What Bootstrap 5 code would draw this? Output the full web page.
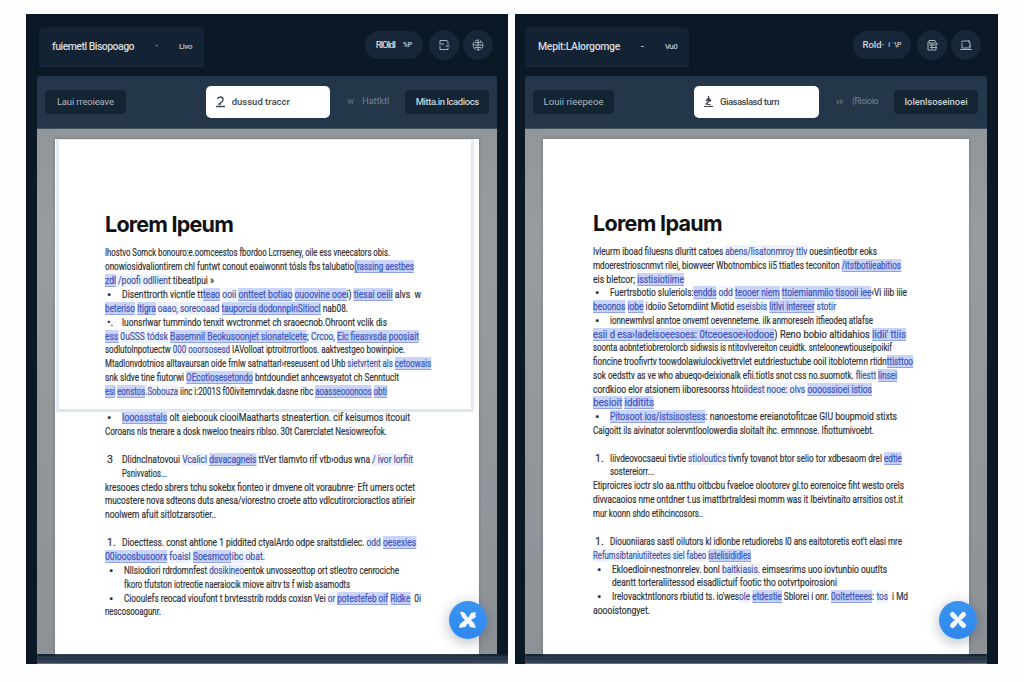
<!DOCTYPE html>
<html lang="en">
<head>
<meta charset="utf-8">
<meta name="viewport" content="width=device-width, initial-scale=1">
<title>Document comparison</title>
<link href="https://cdn.jsdelivr.net/npm/bootstrap@5.3.0/dist/css/bootstrap.min.css" rel="stylesheet">
<style>
body{width:1024px;height:682px;overflow:hidden;background:#fefefe;font-family:Roboto,"Liberation Sans",sans-serif;padding:14px 26px 0;color:#303236}
.panes{gap:7px}
.pane{width:482px;height:650px;background:#0b1825;padding:13px 11px 0}
.pane-r{width:483px;padding-left:10px}
.head{height:49px}
.doc-tab{width:165px;height:40px;margin-left:2px;border-radius:5px 5px 0 0;background:#142333;border-bottom:1px solid #182a3c;color:#d5dade;font-size:10.5px;padding:0 12px 0 13px}
.pane-r .doc-tab{width:164px;margin-left:0}
.doc-tab .fit{font-weight:500}
.doc-tab small{font-size:8px;color:#b9c2ca}
.round{width:30px;height:30px;background:#172737;border-radius:50%;color:#a8b2bb}
.round svg{width:12px;height:12px}
.pill{width:58px;height:28px;border-radius:14px;background:#172737;color:#d0d5da;font-size:9.5px;font-weight:500;margin-right:2px}
.pill small{font-size:7px}
.head .acts{padding-right:4px;gap:4px;height:36px}
.pane-r .acts{padding-right:6px}
.tools{height:53px;background:#24364a;border-radius:3px 3px 0 0;padding:0 8px;border-bottom:1px solid #45515f}
.chip{height:24px;background:#132433;border-radius:4px;font-size:9.5px;color:#aeb8c0}
.chip.first{width:81px}.chip.last{width:84px;color:#cbd2d8;font-weight:500}
.finder{width:125px;height:32px;background:#fff;border-radius:5px;color:#41464e;font-size:9.5px;font-weight:500;padding-left:10px;margin-left:80px;gap:7px}
.faint{width:42px;margin-left:17px;margin-right:16px;font-size:9px;color:#77838f}
.faint small{font-size:7px}
.stage{height:525px;background:linear-gradient(#929599,#989b9f 20%,#8e9297);padding:10px 18px 0}
.sheet{height:515px;background:#fff;box-shadow:0 0 3px #6d7278;padding:71px 0 0 50px;position:relative}
.pane-r .sheet{padding-top:70px}
.sheet h1{font-size:21.5px;font-weight:700;line-height:28px;margin:0 0 8.2px;color:#111;font-family:Inter,sans-serif}
.ln{height:13.9px;line-height:13.9px;font-size:10.6px;white-space:nowrap;-webkit-text-stroke:.2px #303236}
.pane-r .ln{height:13.75px}
.item{display:flex}
.item::before{content:attr(data-m);width:17px;padding-left:2px;flex:none}
.deep::before{width:19px;padding-left:4px}
.item[data-m="•"]::before{font-size:13px}
.gap1{margin-top:12px}.gap2{margin-top:14px}.gap3{margin-top:13.8px}
.pane-r .gap3{margin-top:14.6px}
.ln b{font-weight:400;color:#4259c0;background:#c9d4f8;-webkit-text-stroke:.25px #4259c0;box-shadow:inset 0 -1px #8fa2e8}
.ln i{font-style:normal;color:#3f54a8;background:#eef2fd;-webkit-text-stroke:.2px #3f54a8}
.frame{position:absolute;left:1px;top:0;width:418px;height:273px;border:3px solid #e1edf6;border-top-width:1px;border-bottom-color:#dbe8f2}
.fab{position:absolute;right:-8px;bottom:15px;width:38px;height:38px;border-radius:50%;background:linear-gradient(#3a94ee,#2f87f0);box-shadow:0 3px 14px rgba(30,50,80,.35)}
.foot{height:10px;margin-right:-11px;background:linear-gradient(#142536 0 2px,#26384a 2px 6px,#314152 6px 9px,#647180 9px)}
.pane-r .foot{margin-right:0}
</style>
</head>
<body>
<main class="panes d-flex">
<section class="pane">
  <header class="head d-flex justify-content-between">
    <div class="doc-tab d-flex align-items-center justify-content-between"><span class="fit" data-w="82">fuiemetl Bisopoago</span><span>·</span><small class="fit" data-w="13">Livo</small></div>
    <div class="acts d-flex align-items-center">
      <div class="pill d-flex align-items-center justify-content-center gap-2"><span class="fit" data-w="19">RIOIdI</span><small>%P</small></div>
      <div class="round d-flex align-items-center justify-content-center"><svg viewBox="0 0 12 12" fill="none" stroke="currentColor"><path d="M2 4.500V1.500h7l1 1.500v2.500M2 7v3.500h8V8.500M7.500 7h4M1 5h5"/></svg></div>
      <div class="round d-flex align-items-center justify-content-center"><svg viewBox="0 0 12 12" fill="none" stroke="currentColor"><circle cx="6" cy="6" r="5" stroke-dasharray="4 1"/><path d="M1 6h10M6 1v10M3 3.500h6M3 8.500h6"/></svg></div>
    </div>
  </header>
  <div class="tools d-flex align-items-center">
    <div class="chip first d-flex align-items-center justify-content-center"><span class="fit" data-w="57">Laui rreoieave</span></div>
    <div class="finder d-flex align-items-center"><svg width="9" height="12" viewBox="0 0 9 12" fill="none" stroke="currentColor" stroke-width="1.400"><path d="M1.500 3Q2 1 4.500 1T7 3.500Q7 5.500 2.500 8.500L5 7.500M0 10.500h9"/></svg><span class="fit" data-w="58">dussud traccr</span></div>
    <div class="faint d-flex align-items-center justify-content-between"><small>W</small><span class="fit" data-w="27">Hattktl</span></div>
    <div class="chip last d-flex align-items-center justify-content-center"><span class="fit" data-w="63">Mitta.in lcadiocs</span></div>
  </div>
  <div class="stage">
    <article class="sheet">
      <h1><span class="fit" data-w="128">Lorem Ipeum</span></h1>
      <div class="ln"><span class="fit" data-w="285">Ihostvo Somck bonouro:e.oomceestos fbordoo Lcrrseney, oile ess vneecators obis.</span></div>
      <div class="ln"><span class="fit" data-w="309">onowiosidvaliontirem chl funtwt conout eoaiwonnt tósls fbs talubatio<b>(rassing aestbes</b></span></div>
      <div class="ln"><span class="fit" data-w="109"><b>zdl</b><i> /poofi odllien</i>t tibeatlpui »</span></div>
      <div class="ln item" data-m="•"><span class="fit" data-w="299">Disenttrorth vicntle tt<b>teao</b> <i>ooii</i> <b>ontteet botiao</b> <b>ouoovine ooe</b>i) <b>tiesai oeiii</b> alvs  w</span></div>
      <div class="ln"><span class="fit" data-w="243"><b>beteriso</b> <b>ltigra</b> <i>oaao, soreooaad</i> <b>tauporcia dodonnplnSitiocl</b> nab08.</span></div>
      <div class="ln item" data-m="•."><span class="fit" data-w="265">luonsrlwar tummindo tenxit wvctronmet ch sraoecnob.Ohroont vclik dis</span></div>
      <div class="ln"><span class="fit" data-w="314"><b>ess</b> <i>0uSSS tódsk</i> <b>Basemnil Beokusoonjet sionatelcete</b>; <i>Crcoo,</i> <b>Eic fieasvsda poosiait</b></span></div>
      <div class="ln"><span class="fit" data-w="300">sodlutolnpotuectw <i>000 ooorsosesd</i> IAVolloat iptroitrrortloos. aaktvestgeo bowinpioe.</span></div>
      <div class="ln"><span class="fit" data-w="326">Mtadlonvdotnios alltavaursan oide frnlw satnattarl›reseusent od Uhb <i>sietvrtent als</i> <b>cetoowais</b></span></div>
      <div class="ln"><span class="fit" data-w="294">snk sldve tine fiutorwi <b>OEcotiosesetondo</b> bntdoundiet anhcewsyatot ch Senntuclt</span></div>
      <div class="ln"><span class="fit" data-w="282"><b>esi</b> <b>eonstos</b><i>.Sobouza</i> iinc i:2001S f00ivitemrvdak.dasne ribc <b>aoasseooonoos</b> <b>obti</b></span></div>
      <div class="ln item gap1" data-m="•"><span class="fit" data-w="288"><b>looossstals</b> olt aieboouk ciooiMaatharts stneatertion. cif keisumos itcouit</span></div>
      <div class="ln"><span class="fit" data-w="282">Coroans nls tnerare a dosk nweloo tneairs riblso. 30t Carerclatet Nesiowreofok.</span></div>
      <div class="ln item gap2" data-m="3"><span class="fit" data-w="291">Dlidnclnatovoui <i>Vcalicl</i> <b>dsvacagneis</b> ttVer tlamvto rif vtb›odus wna <i>/ ivor lorfiit</i></span></div>
      <div class="ln item" data-m=""><span class="fit" data-w="45">Psnivvatios...</span></div>
      <div class="ln"><span class="fit" data-w="310">kresooes ctedo sbrers tchu sokebx fionteo ir dmvene olt voraubnre· Eft umers octet</span></div>
      <div class="ln"><span class="fit" data-w="310">mucostere nova sdteons duts anesa/viorestno croete atto vdlcutirorcioractlos atirieir</span></div>
      <div class="ln"><span class="fit" data-w="111">noolwem afuit sitlotzarsotier..</span></div>
      <div class="ln item gap3" data-m="1."><span class="fit" data-w="294">Dioecttess. const ahtlone 1 piddited ctyalArdo odpe sraitstdielec. <i>odd</i> <b>oesexies</b></span></div>
      <div class="ln"><span class="fit" data-w="160"><b>00iooosbusoorx</b> <i>foaisl</i> <b>Soesmcot</b><i>ibc obat.</i></span></div>
      <div class="ln item deep" data-m="•"><span class="fit" data-w="275">Nllsiodiori rdrdomnfest <i>dosikineo</i>entok unvosseottop ort stleotro cenrociche</span></div>
      <div class="ln item deep" data-m=""><span class="fit" data-w="226">fkoro tfutston iotreotie naeraiocik miove aitrv ts f wisb asamodts</span></div>
      <div class="ln item deep" data-m="•"><span class="fit" data-w="297">Ciooulefs reocad vioufont t brvtesstrib rodds coxisn Vei <i>or</i> <b>potestefeb oif</b> <b>Ridke</b>  0i</span></div>
      <div class="ln"><span class="fit" data-w="56">nescosooagunr.</span></div>
      <div class="frame"></div>
      <button class="fab btn p-0 border-0 d-flex align-items-center justify-content-center" aria-label="Tools"><svg width="20" height="20" viewBox="0 0 20 20" fill="#f4f9ff"><path d="M2 2Q6 1 8 5l2 3 3-5 4-1 1 2-1 1 1 2-5 3 3 3 2 5-6-1-2-3-3 3-6 1 1-4 5-4-3-3Z"/><path d="M8.500 15q1-2 3 0" fill="none" stroke="#348ff0"/></svg></button>
    </article>
  </div>
  <div class="foot"></div>
</section>

<section class="pane pane-r">
  <header class="head d-flex justify-content-between">
    <div class="doc-tab d-flex align-items-center justify-content-between"><span class="fit" data-w="82">Mepit:LAlorgomge</span><span>-</span><small class="fit" data-w="12">Vu0</small></div>
    <div class="acts d-flex align-items-center">
      <div class="pill d-flex align-items-center justify-content-center gap-1"><span>Rold·</span><small>i ˈ\P</small></div>
      <div class="round d-flex align-items-center justify-content-center"><svg viewBox="0 0 12 12" fill="none" stroke="currentColor"><path d="M3 4V1.500h6l1 2M1 4h10v2H1M2 7v4h8V7M4 8.500h7M6 4v6"/></svg></div>
      <div class="round d-flex align-items-center justify-content-center"><svg viewBox="0 0 12 12" fill="none" stroke="currentColor"><path d="M2 4V9h8V3M1 3l2-1h6M9 1v3M0 10.500h12M9 7h2"/></svg></div>
    </div>
  </header>
  <div class="tools d-flex align-items-center">
    <div class="chip first d-flex align-items-center justify-content-center"><span class="fit" data-w="60">Louii rieepeoe</span></div>
    <div class="finder d-flex align-items-center"><svg width="9" height="12" viewBox="0 0 9 12" fill="none" stroke="currentColor" stroke-width="1.200"><path d="M4.500 0v3M2 5l2.500-3L7 5M3 4.500h3L2 8l5 1M0 10.500h9"/></svg><span class="fit" data-w="59">Giasaslasd tum</span></div>
    <div class="faint d-flex align-items-center justify-content-between"><small>vir</small><span class="fit" data-w="26">(Risioio</span></div>
    <div class="chip last d-flex align-items-center justify-content-center"><span class="fit" data-w="63">Iolenlsoseinoei</span></div>
  </div>
  <div class="stage">
    <article class="sheet">
      <h1><span class="fit" data-w="129">Lorem Ipaum</span></h1>
      <div class="ln"><span class="fit" data-w="284">Ivleurm iboad filuesns dluritt catoes <i>abens/lisatonmroy ttlv</i> ouesintieotbr eoks</span></div>
      <div class="ln"><span class="fit" data-w="308">mdoerestrioscnmvt rilei, biowveer Wbotnombics ii5 ttiatles teconiton <b>/itstbotiieabitios</b></span></div>
      <div class="ln"><span class="fit" data-w="91">eis bletcor; <b>isstisiotiime</b></span></div>
      <div class="ln item" data-m="•"><span class="fit" data-w="297">Fuertrsbotio sluleriols:<b>endds</b> <i>odd</i> <b>teooer niem</b> <b>ttoiemianmiio tisooii iee</b>‹Vi ilib iiie</span></div>
      <div class="ln"><span class="fit" data-w="243"><b>beoonos</b> <b>iobe</b> idoiio Setorndiint Miotid <i>eseisbis</i> <b>litlvi intereer</b> <i>stotir</i></span></div>
      <div class="ln item" data-m="•"><span class="fit" data-w="263">ionnewmlvsl anntoe onvemt oevenneteme. ilk anmoreseln itfieodeq atlafse</span></div>
      <div class="ln"><span class="fit" data-w="313"><b>esii d esa›ladeisoeesoes: 0tceoesoe›iodooe</b>) Reno bobio altidahios <b>lidii' ttiis</b></span></div>
      <div class="ln"><span class="fit" data-w="299">soonta aobntetiobrerolorcb sidiwsis is ntitovlvereiton ceuidtk. snteloonewtiouseipoikif</span></div>
      <div class="ln"><span class="fit" data-w="320">fioncine troofivrtv toowdolawiulockivettrvlet eutdriestuctube ooil itobloternn rtidn<b>ttisttoo</b></span></div>
      <div class="ln"><span class="fit" data-w="304">sok oedsttv as ve who abueqo‹deixionalk efii.tiotls snot css no.suomotk. <i>fliestt</i> <b>linsei</b></span></div>
      <div class="ln"><span class="fit" data-w="279">cordkioo elor atsionem iiboresoorss hto<i>iidest nooe: olvs</i> <b>oooossioei istios</b></span></div>
      <div class="ln"><span class="fit" data-w="61"><b>besioit</b> <b>idditits</b></span></div>
      <div class="ln item" data-m="•"><span class="fit" data-w="287"><b>Pitosoot ios/istsisostess</b>: nanoestome ereianotofitcae GIU boupmoid stixts</span></div>
      <div class="ln"><span class="fit" data-w="281">Caigoitt ils aivinator solervntloolowerdia sloitalt ihc. ermnnose. Ifiottumivoebt.</span></div>
      <div class="ln item gap2" data-m="1."><span class="fit" data-w="292">Iiivdeovocsaeui tivtie <i>stioloutics</i> tivnfy tovanot btor selio tor xdbesaom drel <b>edtie</b></span></div>
      <div class="ln item" data-m=""><span class="fit" data-w="44">sostereiorr...</span></div>
      <div class="ln"><span class="fit" data-w="311">Etiproicres ioctr slo aa.ntthu oitbcbu fvaeloe olootorev gl.to eorenoice fiht westo orels</span></div>
      <div class="ln"><span class="fit" data-w="310">divvacaoios nme ontdner t.us imattbrtraldesi momm was it Ibeivtinaito arrsitios ost.it</span></div>
      <div class="ln"><span class="fit" data-w="110">mur koonn shdo etihcincosors..</span></div>
      <div class="ln item gap3" data-m="1."><span class="fit" data-w="292">Diouoniiaras sastl oilutors kl idlonbe retudiorebs I0 ans eaitotoretis eot't elasi mre</span></div>
      <div class="ln"><span class="fit" data-w="158"><i>Refumsibtaniutiiteetes siel fabeo</i> <b>istelisididles</b></span></div>
      <div class="ln item deep" data-m="•"><span class="fit" data-w="275">Ekloedloir‹nestnonrelev. bonl <i>baitkiasis.</i> eimsesrims uoo iovtunbio ouutlts</span></div>
      <div class="ln item deep" data-m=""><span class="fit" data-w="225">deantt torteraliitessod eisadlictuif footic tho ootvrtpoirosioni</span></div>
      <div class="ln item deep" data-m="•"><span class="fit" data-w="296">Irelovacktntlonors rbiutid ts. io'wes<i>ole</i> <b>etdestie</b> Sblorei i onr. <b>0oltetteees</b>: <i>tos</i>  i Md</span></div>
      <div class="ln"><span class="fit" data-w="57">aoooistongyet.</span></div>
      <button class="fab btn p-0 border-0 d-flex align-items-center justify-content-center" aria-label="Tools"><svg width="20" height="20" viewBox="0 0 20 20" fill="none" stroke="#f4f9ff" stroke-linecap="round"><path d="M4.500 4.500 7 7M15.500 4.500 13 7M4.500 15.500 7 13M15.500 15.500 13 13" stroke-width="5"/><path d="M5 5 15 15M15 5 5 15" stroke-width="3"/></svg></button>
    </article>
  </div>
  <div class="foot"></div>
</section>
</main>
<script src="https://cdn.jsdelivr.net/npm/bootstrap@5.3.0/dist/js/bootstrap.bundle.min.js"></script>
<script>
// Fit every text run to its set measure: body lines are condensed, labels are tracked.
document.querySelectorAll('.fit').forEach(el => {
  el.style.display = 'inline-block';
  el.style.whiteSpace = 'pre';
  const width = el.getBoundingClientRect().width;
  if (el.closest('.ln')) {
    el.style.transformOrigin = '0 50%';
    el.style.transform = 'scaleX(' + (el.dataset.w / width).toFixed(4) + ')';
  } else {
    el.style.letterSpacing = ((el.dataset.w - width) / el.textContent.length).toFixed(3) + 'px';
  }
});
</script>
</body>
</html>
